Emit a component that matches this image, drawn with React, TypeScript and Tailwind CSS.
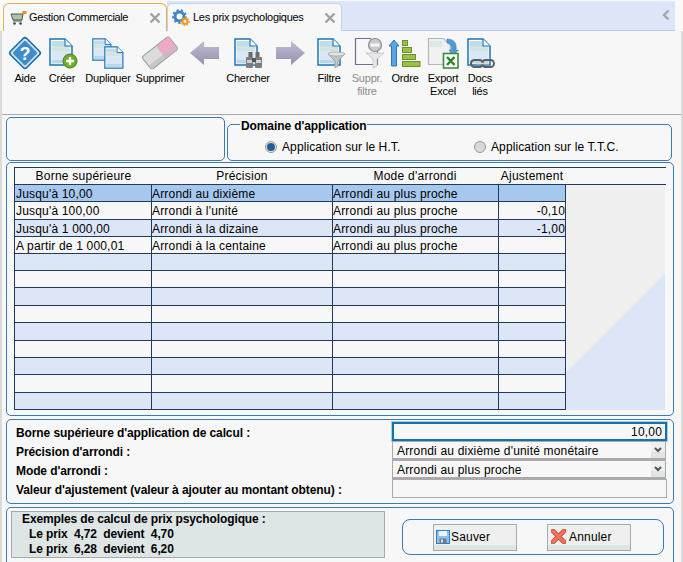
import type { ReactNode } from "react";

// Icons are drawn in page coordinates: each svg's viewBox is its window on the toolbar.
function Ico({ x, w, children }: { x: number; w: number; children: ReactNode }) {
  return (
    <svg width={w} height={32} viewBox={`${x} 37 ${w} 32`} className="overflow-visible block">
      {children}
    </svg>
  );
}

function Doc({ x, y, s = 1 }: { x: number; y: number; s?: number }) {
  return (
    <g transform={`translate(${x} ${y}) scale(${s})`}>
      <path d="M1 1h15l7 7v19H1z" fill="#fff" />
      <rect x="2.5" y="3" width="13" height="5" fill="#c3dde6" />
      <rect x="2.5" y="8" width="19" height="5" fill="#cfe5e3" />
      <rect x="2.5" y="13" width="19" height="9" fill="#dbe6f7" />
      <rect x="2.5" y="22" width="19" height="3.5" fill="#b9d6ee" />
      <path d="M1 1h15l7 7v19H1z" fill="none" stroke="#1b76b6" strokeWidth="1.5" />
      <path d="M16 1v7h7" fill="#fff" stroke="#1b76b6" strokeWidth="1.2" />
    </g>
  );
}

function Funnel({ x, y }: { x: number; y: number }) {
  return (
    <g transform={`translate(${x} ${y})`}>
      <path d="M0 2 L7 9 V16 L10 14 V9 L17 2z" fill="#c4c4c4" stroke="#9d9d9d" strokeWidth="0.8" />
      <ellipse cx="8.5" cy="2" rx="8.5" ry="2" fill="#e4e4e4" stroke="#a5a5a5" strokeWidth="0.8" />
    </g>
  );
}

function Binoculars({ x, y }: { x: number; y: number }) {
  return (
    <g transform={`translate(${x} ${y})`}>
      <rect x="2.5" y="0" width="4" height="5" fill="#6b6b6b" />
      <rect x="9.5" y="0" width="4" height="5" fill="#6b6b6b" />
      <rect x="0" y="5" width="7" height="11" rx="1" fill="#7d7d7d" />
      <rect x="9" y="5" width="7" height="11" rx="1" fill="#7d7d7d" />
      <rect x="1" y="8" width="5" height="3" fill="#d2d2d2" />
      <rect x="10" y="8" width="5" height="3" fill="#d2d2d2" />
      <rect x="6" y="6" width="4" height="4" fill="#565656" />
    </g>
  );
}

function ArrowShape({ d }: { d: string }) {
  return <path d={d} fill="url(#arrowFill)" />;
}

const tools: { lines: string[]; w: number; x: number; off?: boolean; icon?: ReactNode }[] = [
  {
    lines: ["Aide"],
    x: 6,
    w: 38,
    icon: (
      <>
        <rect x="13.5" y="41.5" width="23" height="23" rx="2.5" transform="rotate(45 25 53)" fill="#cfe2f2" stroke="#1d6aa3" strokeWidth="1.6" />
        <rect x="16" y="44" width="18" height="18" rx="1.5" transform="rotate(45 25 53)" fill="#3f8ccb" />
        <text x="25" y="59.5" textAnchor="middle" fontSize="18" fontWeight="700" fill="#fff" fontFamily="Liberation Sans, sans-serif">?</text>
      </>
    ),
  },
  {
    lines: ["Créer"],
    x: 44,
    w: 36,
    icon: (
      <>
        <Doc x={49} y={38} />
        <circle cx="70" cy="61" r="7" fill="#6fae2c" stroke="#477e1a" strokeWidth="1" />
        <path d="M66 61h8M70 57v8" stroke="#fff" strokeWidth="2.4" />
      </>
    ),
  },
  {
    lines: ["Dupliquer"],
    x: 80,
    w: 56,
    icon: (
      <>
        <Doc x={92} y={38} s={0.82} />
        <Doc x={104} y={46} s={0.82} />
      </>
    ),
  },
  {
    lines: ["Supprimer"],
    x: 136,
    w: 48,
    icon: (
      <g transform="rotate(-38 160 53)">
        <rect x="143" y="45" width="34" height="16" rx="2.5" fill="#dcdcdc" stroke="#9b9b9b" strokeWidth="1" />
        <rect x="161" y="45.5" width="15.5" height="15" rx="2" fill="#efa9c6" />
        <rect x="143.5" y="56" width="33" height="4.5" rx="2" fill="#bdbdbd" opacity="0.7" />
      </g>
    ),
  },
  { lines: [], x: 184, w: 40, icon: <ArrowShape d="M190 53 L204 41 V47 H219 V59 H204 V65z" /> },
  {
    lines: ["Chercher"],
    x: 224,
    w: 48,
    icon: (
      <>
        <Doc x={234} y={38} />
        <Binoculars x={246} y={52} />
      </>
    ),
  },
  { lines: [], x: 272, w: 36, icon: <ArrowShape d="M305 53 L291 41 V47 H276 V59 H291 V65z" /> },
  {
    lines: ["Filtre"],
    x: 308,
    w: 42,
    icon: (
      <>
        <Doc x={317} y={38} />
        <Funnel x={328} y={52} />
      </>
    ),
  },
  {
    lines: ["Suppr.", "filtre"],
    x: 350,
    w: 34,
    off: true,
    icon: (
      <>
        <path d="M355.5 38.5h15l7 7v19h-22z" fill="#f7f7f7" stroke="#6f6f96" strokeWidth="1.2" />
        <circle cx="375" cy="45" r="6.5" fill="#c9c9c9" stroke="#8e8e9e" strokeWidth="1.2" />
        <rect x="370.5" y="43.5" width="9" height="3" fill="#f5f5f5" />
        <path d="M366 53 L373 59 V68 L377 66 V59 L384 53z" fill="#e8e8e8" stroke="#c0c0c0" strokeWidth="0.8" />
      </>
    ),
  },
  {
    lines: ["Ordre"],
    x: 384,
    w: 42,
    icon: (
      <>
        <path d="M394 40 L399 46 H396.5 V66 H391.5 V46 H389z" fill="#5aa5e2" stroke="#1f6fae" strokeWidth="0.9" />
        <g fill="#9bc04a" stroke="#5d8a22" strokeWidth="0.9">
          <rect x="402.5" y="40.5" width="5" height="5" />
          <rect x="402.5" y="47.5" width="9" height="5" />
          <rect x="402.5" y="54.5" width="13" height="5" />
          <rect x="402.5" y="61.5" width="17.5" height="5" />
        </g>
      </>
    ),
  },
  {
    lines: ["Export", "Excel"],
    x: 426,
    w: 34,
    icon: (
      <>
        <path d="M428.5 38.5h15l7 7v19h-22z" fill="#f0f0f0" stroke="#b5b5b5" strokeWidth="1.2" />
        <rect x="430" y="41" width="12" height="6" fill="#dde8e6" />
        <path d="M447 39 C454 39 457 43 456 50 L458.5 50 L453.5 55 L449 50 L451.5 50 C452 46 450.5 43 447 43z" fill="#4f9bd8" stroke="#2b78b5" strokeWidth="0.5" />
        <rect x="443.5" y="53.5" width="14.5" height="14.5" fill="#fff" stroke="#3f8a3a" strokeWidth="1.6" />
        <path d="M447 57 L454.5 65 M454.5 57 L447 65" stroke="#2f7f2f" strokeWidth="2.4" />
      </>
    ),
  },
  {
    lines: ["Docs", "liés"],
    x: 460,
    w: 40,
    icon: (
      <>
        <Doc x={467} y={38} />
        <rect x="471" y="60" width="12" height="7" rx="3.5" fill="none" stroke="#5e5e5e" strokeWidth="2" />
        <rect x="482" y="60" width="12" height="7" rx="3.5" fill="none" stroke="#5e5e5e" strokeWidth="2" />
        <path d="M476 63.5h13" stroke="#d8d8d8" strokeWidth="1.6" />
      </>
    ),
  },
];

const rows: { a: string; b: string; c: string; d: string; h: string; bg: string }[] = [
  { a: "Jusqu'à 10,00", b: "Arrondi au dixième", c: "Arrondi au plus proche", d: "", h: "h-[17px]", bg: "bg-[#a6c8ef]" },
  { a: "Jusqu'à 100,00", b: "Arrondi à l'unité", c: "Arrondi au plus proche", d: "-0,10", h: "h-[18px]", bg: "bg-[#f7f7f7]" },
  { a: "Jusqu'à 1 000,00", b: "Arrondi à la dizaine", c: "Arrondi au plus proche", d: "-1,00", h: "h-[17px]", bg: "bg-[#dde6f7]" },
  { a: "A partir de 1 000,01", b: "Arrondi à la centaine", c: "Arrondi au plus proche", d: "", h: "h-[17px]", bg: "bg-[#f7f7f7]" },
  { a: "", b: "", c: "", d: "", h: "h-[17px]", bg: "bg-[#dde6f7]" },
  { a: "", b: "", c: "", d: "", h: "h-[17px]", bg: "bg-[#f7f7f7]" },
  { a: "", b: "", c: "", d: "", h: "h-[18px]", bg: "bg-[#dde6f7]" },
  { a: "", b: "", c: "", d: "", h: "h-[17px]", bg: "bg-[#f7f7f7]" },
  { a: "", b: "", c: "", d: "", h: "h-[18px]", bg: "bg-[#dde6f7]" },
  { a: "", b: "", c: "", d: "", h: "h-[17px]", bg: "bg-[#f7f7f7]" },
  { a: "", b: "", c: "", d: "", h: "h-[17px]", bg: "bg-[#dde6f7]" },
  { a: "", b: "", c: "", d: "", h: "h-[18px]", bg: "bg-[#f7f7f7]" },
  { a: "", b: "", c: "", d: "", h: "h-[17px]", bg: "bg-[#dde6f7]" },
];

const fields = [
  "Borne supérieure d'application de calcul :",
  "Précision d'arrondi :",
  "Mode d'arrondi :",
  "Valeur d'ajustement (valeur à ajouter au montant obtenu) :",
];

const cell = "border-l border-[#1f3a5c] overflow-hidden whitespace-nowrap";
const panel = "border border-[#3b7ab3] rounded-[5px]";

function CloseX() {
  return (
    <svg width="12" height="12" viewBox="0 0 12 12" className="block">
      <path d="M1.5 1.5l9 9M10.5 1.5l-9 9" stroke="#a0a0a0" strokeWidth="2.4" />
    </svg>
  );
}

function Select({ value }: { value: string }) {
  return (
    <div className="flex w-[274px] h-[19px] border-t border-b-2 border-l border-r border-[#aca8ac] bg-[#f7f7f7]">
      <span className="flex-1 pl-[4px] leading-[18px] tracking-[0.18px]">{value}</span>
      <span className="w-[14px] flex items-center justify-center bg-[linear-gradient(#efefef_60%,#dde5e5_60%)]">
        <svg width="8" height="6" viewBox="0 0 8 6">
          <path d="M1 1l3 3 3-3" fill="none" stroke="#555" strokeWidth="2" />
        </svg>
      </span>
    </div>
  );
}

export default function App() {
  return (
    <div className="relative w-[683px] h-[562px] overflow-hidden bg-[#f9f9f9] text-black text-[12px] font-['Liberation_Sans',Arial,sans-serif]">
      <svg width="0" height="0" className="absolute">
        <defs>
          <linearGradient id="arrowFill" x1="0" y1="0" x2="0" y2="1">
            <stop offset="0" stopColor="#c2bcd2" />
            <stop offset="1" stopColor="#9590b0" />
          </linearGradient>
        </defs>
      </svg>

      {/* Tabs */}
      <div className="flex h-[31px] pl-[3px]">
        <div className="mt-[3px] w-[164px] h-[28px] flex items-center pl-[6px] pr-[5px] border-t border-x border-[#e8b04a] rounded-t-[6px] bg-[#f7f7f7]">
          <svg width="17" height="14" viewBox="0 0 17 14" className="mr-[2px] block">
            <path d="M1 3h12l-1 6H3z" fill="#a9c7a0" stroke="#555" strokeWidth="1" />
            <path d="M3 10h9" stroke="#555" strokeWidth="1" />
            <circle cx="4.5" cy="12.5" r="1.3" fill="#444" />
            <circle cx="10.5" cy="12.5" r="1.3" fill="#444" />
            <rect x="12.5" y="0" width="4" height="3" fill="#ef8a2b" />
          </svg>
          <span className="flex-1 text-[11px] tracking-[-0.35px]">Gestion Commerciale</span>
          <CloseX />
        </div>
        <div className="mt-[1px] w-[508px] h-[30px] flex bg-[#dde6f7]">
          <div className="mt-[2px] w-[175px] h-[28px] flex items-center pl-[4px] pr-[5px] border-t border-x border-[#bcd3ec] rounded-t-[5px] bg-[#f7f7f7]">
            <svg width="18" height="17" viewBox="0 0 18 17" className="mr-[3px] block">
              <circle cx="7.5" cy="7.5" r="4.5" fill="#fff" stroke="#3f86c8" strokeWidth="3" />
              <circle cx="7.5" cy="7.5" r="6.4" fill="none" stroke="#3f86c8" strokeWidth="2" strokeDasharray="2.2 2.2" />
              <circle cx="13" cy="12.5" r="2.4" fill="#fff" stroke="#ee9a26" strokeWidth="2" />
              <circle cx="13" cy="12.5" r="4" fill="none" stroke="#ee9a26" strokeWidth="1.4" strokeDasharray="1.5 1.5" />
            </svg>
            <span className="flex-1 text-[11px] tracking-[-0.3px]">Les prix psychologiques</span>
            <CloseX />
          </div>
          <div className="flex-1 flex items-center justify-end pr-[5px] pb-[2px] border-b border-[#b9d0e8]">
            <svg width="8" height="12" viewBox="0 0 8 12" className="block">
              <path d="M6.5 1.5l-4.5 4.5 4.5 4.5" fill="none" stroke="#a5a5a5" strokeWidth="2.4" />
            </svg>
          </div>
        </div>
      </div>

      <div className="h-[531px] border-x-2 border-[#dadada] bg-[#f7f7f7]">
        {/* Toolbar */}
        <div className="flex h-[84px] pt-[6px] pl-[4px] border-b border-[#aea8ae] text-[11px] leading-[13px] tracking-[-0.2px]">
          {tools.map((t) => (
            <div key={t.x} className="flex flex-col items-center" style={{ width: t.w }}>
              <Ico x={t.x} w={t.w}>{t.icon}</Ico>
              <div className={t.off ? "mt-[3px] text-center text-[#8c8c8c]" : "mt-[3px] text-center"}>
                {t.lines.map((l) => (
                  <div key={l} className="whitespace-nowrap">{l}</div>
                ))}
              </div>
            </div>
          ))}
        </div>

        <div className="pl-[4px] pt-[2px]">
          {/* Domaine */}
          <div className="flex items-start gap-[2px]">
            <div className={`${panel} w-[219px] h-[44px]`} />
            <div className={`${panel} relative mt-[7px] w-[445px] h-[37px] flex items-center tracking-[0.1px]`}>
              <span className="absolute left-[12px] top-[-6px] px-[1px] bg-[#f7f7f7] font-bold leading-[14px] tracking-[-0.1px]">
                Domaine d'application
              </span>
              <span className="ml-[37px] mt-[8px] flex items-center w-[209px]">
                <span className="w-[12px] h-[12px] rounded-full border border-[#9a9a9a] bg-[#e6e6e6] flex items-center justify-center mr-[5px]">
                  <span className="w-[8px] h-[8px] rounded-full bg-[#1d5f95]" />
                </span>
                Application sur le H.T.
              </span>
              <span className="mt-[8px] flex items-center">
                <span className="w-[12px] h-[12px] rounded-full border border-[#9a9a9a] bg-[#d8d8d8] mr-[5px]" />
                Application sur le T.T.C.
              </span>
            </div>
          </div>

          {/* Table */}
          <div className={`${panel} mt-[1px] w-[668px] h-[254px] pl-[7px] pt-[4px]`}>
            <div className="flex w-[652px] h-[18px] border-t border-b border-l border-[#1f3a5c] text-center leading-[17px] tracking-[0.25px]">
              <div className="w-[137px]">Borne supérieure</div>
              <div className="w-[180px]">Précision</div>
              <div className="w-[166px]">Mode d'arrondi</div>
              <div className="w-[68px] whitespace-nowrap">Ajustement</div>
            </div>
            <div className="flex">
              <div className="w-[552px]">
                {rows.map((r, i) => (
                  <div key={i} className={`flex border-b border-[#1f3a5c] leading-[18px] tracking-[0.18px] ${r.h} ${r.bg}`}>
                    <div className={`${cell} w-[137px] pl-[1px]`}>{r.a}</div>
                    <div className={`${cell} w-[181px]`}>{r.b}</div>
                    <div className={`${cell} w-[166px]`}>{r.c}</div>
                    <div className={`${cell} w-[68px] border-r text-right`}>{r.d}</div>
                  </div>
                ))}
              </div>
              <div className="w-[99px] bg-[linear-gradient(135deg,#efefef_58%,#dde6f7_58%)]" />
            </div>
          </div>

          {/* Saisie */}
          <div className={`${panel} mt-[3px] w-[668px] h-[85px] pt-[2px]`}>
            {fields.map((f, i) => (
              <div key={f} className="flex h-[19px] items-stretch">
                <div className="w-[385px] pl-[9px] pt-[2px] font-bold leading-[19px] tracking-[-0.1px] whitespace-nowrap">{f}</div>
                {i === 0 && (
                  <div className="w-[275px] border-2 border-[#0f72ab] shadow-[0_0_0_1px_#a9d0e8] text-right pr-[3px] leading-[17px] tracking-[0.18px]">10,00</div>
                )}
                {i === 1 && <Select value="Arrondi au dixième d'unité monétaire" />}
                {i === 2 && <Select value="Arrondi au plus proche" />}
                {i === 3 && <div className="w-[275px] border border-[#aca8ac]" />}
              </div>
            ))}
          </div>

          {/* Exemples + boutons */}
          <div className={`${panel} mt-[3px] w-[668px] h-[60px] flex items-start pl-[4px] pt-[3px]`}>
            <div className="w-[374px] h-[47px] border border-[#a9a9a9] bg-[#dde5e5] font-bold leading-[15px] tracking-[-0.12px] pl-[10px] whitespace-pre">
              <div>Exemples de calcul de prix psychologique :</div>
              <div className="pl-[7px]">Le prix  4,72  devient  4,70</div>
              <div className="pl-[7px]">Le prix  6,28  devient  6,20</div>
            </div>
            <div className="ml-[17px] mt-[8px] w-[262px] h-[36px] flex items-center gap-[30px] pl-[30px] border border-[#3b7ab3] rounded-[8px]">
              <div className="w-[84px] h-[27px] flex items-center pl-[2px] pb-[1px] gap-[1px] tracking-[0.18px] border border-[#aaaaaa] bg-[linear-gradient(#efefef_80%,#dde5e5_80%)]">
                <svg width="14" height="14" viewBox="0 0 14 14" className="block">
                  <rect x="0.5" y="0.5" width="13" height="13" fill="#8ec2ee" stroke="#2c7fc0" />
                  <rect x="3" y="1" width="8" height="5" fill="#eef4fa" />
                  <rect x="3.5" y="8.5" width="7" height="5" fill="#6d7d8a" />
                  <rect x="5" y="9.5" width="2" height="3" fill="#dfe7ee" />
                </svg>
                Sauver
              </div>
              <div className="w-[84px] h-[27px] flex items-center pl-[3px] pb-[1px] gap-[3px] tracking-[0.18px] border border-[#aaaaaa] bg-[linear-gradient(#efefef_80%,#dde5e5_80%)]">
                <svg width="15" height="15" viewBox="0 0 15 15" className="block">
                  <path d="M2 2l11 11M13 2L2 13" stroke="#c9503a" strokeWidth="4.6" strokeLinecap="round" />
                  <path d="M2 2l11 11M13 2L2 13" stroke="#f4735a" strokeWidth="3" strokeLinecap="round" />
                </svg>
                Annuler
              </div>
            </div>
          </div>
        </div>
      </div>
    </div>
  );
}
